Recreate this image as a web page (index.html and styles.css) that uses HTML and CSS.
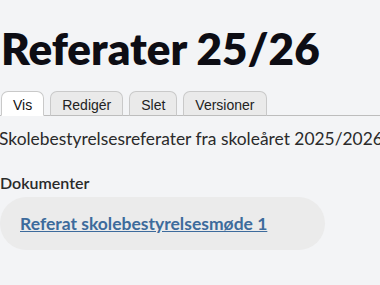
FILE: index.html
```html
<!DOCTYPE html>
<html lang="da">
<head>
<meta charset="utf-8">
<link rel="stylesheet" href="styles.css">
</head>
<body>
<main class="page">
  <h1 class="title">Referater 25/26</h1>
  <ul class="tabs">
    <li class="tab active"><a href="#">Vis</a></li>
    <li class="tab"><a href="#">Redigér</a></li>
    <li class="tab"><a href="#">Slet</a></li>
    <li class="tab"><a href="#">Versioner</a></li>
  </ul>
  <p class="desc">Skolebestyrelsesreferater fra skoleåret 2025/2026</p>
  <section class="docs">
    <div class="docs-label">Dokumenter</div>
    <div class="doc-pill"><a href="#" class="doc-link">Referat skolebestyrelsesmøde 1</a></div>
  </section>
</main>
</body>
</html>
```
FILE: styles.css
```css
html, body {
  margin: 0;
  padding: 0;
  background: #f3f4f6;
  overflow: hidden;
}
.page {
  width: 380px;
  font-family: Lato, "Open Sans", sans-serif;
  color: #222;
}
.title {
  margin: 0 0 0 1px;
  padding-top: 22px;
  font-size: 44px;
  font-weight: 800;
  line-height: 53px;
  color: #0d0d14;
}
.tabs {
  list-style: none;
  margin: 16px 0 0 0;
  padding: 0 0 0 1px;
  display: flex;
  gap: 6px;
  border-bottom: 1px solid #bdbdbd;
  width: 400px;
}
.tab {
  margin-bottom: -1px;
}
.tab a {
  display: block;
  padding: 3px 11px 0;
  height: 20px;
  line-height: 20px;
  font-family: "Liberation Sans", Arial, sans-serif;
  font-size: 14px;
  color: #222;
  text-decoration: none;
  background: #eaeaea;
  border: 1px solid #c9c9c9;
  border-bottom-color: #bdbdbd;
  border-radius: 7px 7px 0 0;
}
.tab.active a {
  background: #fff;
  border-bottom-color: #fff;
  color: #111;
}
.desc {
  margin: 12px 0 0 -1px;
  font-size: 17.4px;
  line-height: 21px;
  white-space: nowrap;
  color: #2a2a2a;
}
.docs {
  margin-top: 24px;
}
.docs-label {
  font-size: 16px;
  line-height: 19px;
  font-weight: 600;
  color: #2a2a2a;
}
.doc-pill {
  margin-top: 5px;
  width: 305px;
  padding: 16px 0 16px 20px;
  line-height: 21px;
  background: #ebebeb;
  border-radius: 27px;
}
.doc-link {
  font-size: 17.5px;
  font-weight: 700;
  color: #3d6b9c;
  text-decoration: underline;
}
```
